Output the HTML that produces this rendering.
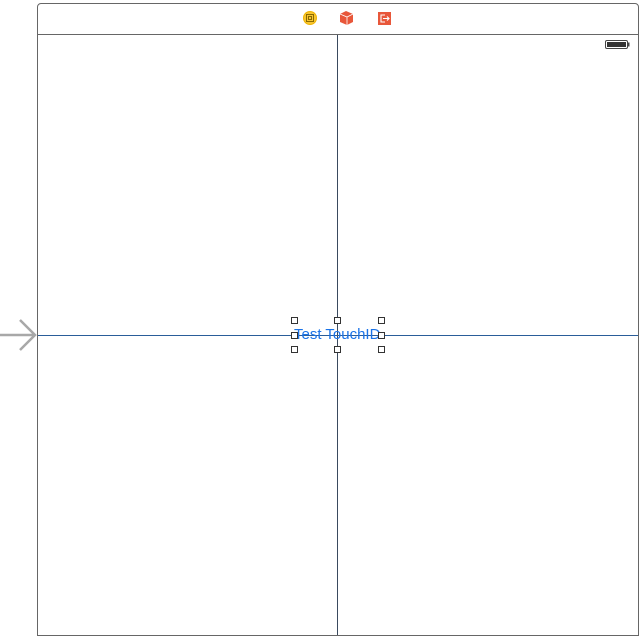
<!DOCTYPE html>
<html><head><meta charset="utf-8"><style>
html,body{margin:0;padding:0;background:#fff;width:641px;height:639px;overflow:hidden;position:relative;font-family:"Liberation Sans",sans-serif}
.frame{position:absolute;left:37px;top:3px;width:600px;height:631px;border:1px solid #666;border-radius:4px 4px 0 0}
.hsep{position:absolute;left:38px;top:34px;width:600px;height:1px;background:#666}
.vl{position:absolute;left:337px;top:35px;width:1px;height:600px;background:#3a4a5e}
.hl{position:absolute;left:38px;top:335px;width:600px;height:1px;background:#2a5d99}
.txt{position:absolute;left:294px;top:326px;font-size:15px;color:#1a73e8;line-height:18px}
.h{position:absolute;width:5px;height:5px;border:1px solid #333;background:#fff}
</style></head><body>
<div class="frame"></div>
<div class="hsep"></div>
<div class="vl"></div>
<div class="hl"></div>
<svg style="position:absolute;left:0;top:0" width="641" height="55">
<circle cx="310" cy="18" r="7" fill="#f0b400"/><circle cx="310" cy="18" r="6" fill="#f7c531"/>
<rect x="306.5" y="14.5" width="7" height="7" fill="none" stroke="#8a6a00" stroke-width="1"/>
<rect x="308.5" y="16.5" width="3" height="3" fill="none" stroke="#8a6a00" stroke-width="1"/>
<path d="M340 14 L346 11 L353 14 L353 22 L347 25 L340 22 Z" fill="#e8573a"/>
<path d="M340 14 L347 17 L353 14 M347 17 L347 25" stroke="#fff" stroke-width="0.8" fill="none"/>
<rect x="378" y="12" width="13" height="13" fill="#e8573a"/>
<path d="M385 15 H381 V22 H385 M383 18.5 H389 M387 16.5 L389 18.5 L387 20.5" stroke="#fff" stroke-width="1.1" fill="none"/>
<rect x="605.5" y="40.5" width="22" height="8" rx="1.5" fill="none" stroke="#444"/>
<rect x="607" y="42" width="19" height="5" fill="#333"/>
<rect x="628" y="42.5" width="1.5" height="4" fill="#444"/>
</svg>
<svg style="position:absolute;left:0;top:315px" width="40" height="40">
<path d="M0 20 H34 M20 5 L35 20 L20 35" stroke="#a8a8a8" stroke-width="2.5" fill="none"/>
</svg>
<div class="txt">Test TouchID</div>
<div class="h" style="left:291px;top:317px"></div>
<div class="h" style="left:334px;top:317px"></div>
<div class="h" style="left:378px;top:317px"></div>
<div class="h" style="left:291px;top:332px"></div>
<div class="h" style="left:378px;top:332px"></div>
<div class="h" style="left:291px;top:346px"></div>
<div class="h" style="left:334px;top:346px"></div>
<div class="h" style="left:378px;top:346px"></div>
</body></html>
